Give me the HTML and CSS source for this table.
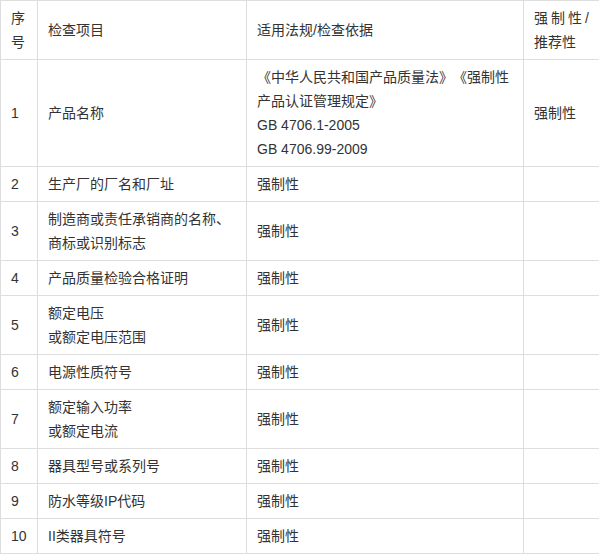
FILE: index.html
```html
<!DOCTYPE html>
<html lang="zh">
<head>
<meta charset="utf-8">
<link rel="stylesheet" href="styles.css">
</head>
<body>
<table class="spec">
<colgroup>
<col class="c-no">
<col class="c-item">
<col class="c-law">
<col class="c-type">
</colgroup>
<thead>
<tr><th>序号</th><th>检查项目</th><th>适用法规/检查依据</th><th class="just">强制性/推荐性</th></tr>
</thead>
<tbody>
<tr><td>1</td><td>产品名称</td><td>《中华人民共和国产品质量法》《强制性产品认证管理规定》<br>GB 4706.1-2005<br>GB 4706.99-2009</td><td>强制性</td></tr>
<tr><td>2</td><td>生产厂的厂名和厂址</td><td>强制性</td><td></td></tr>
<tr><td>3</td><td>制造商或责任承销商的名称、商标或识别标志</td><td>强制性</td><td></td></tr>
<tr><td>4</td><td>产品质量检验合格证明</td><td>强制性</td><td></td></tr>
<tr><td>5</td><td>额定电压<br>或额定电压范围</td><td>强制性</td><td></td></tr>
<tr><td>6</td><td>电源性质符号</td><td>强制性</td><td></td></tr>
<tr><td>7</td><td>额定输入功率<br>或额定电流</td><td>强制性</td><td></td></tr>
<tr><td>8</td><td>器具型号或系列号</td><td>强制性</td><td></td></tr>
<tr><td>9</td><td>防水等级IP代码</td><td>强制性</td><td></td></tr>
<tr><td>10</td><td>II类器具符号</td><td>强制性</td><td></td></tr>
</tbody>
</table>
</body>
</html>
```
FILE: styles.css
```css
html, body {
  margin: 0;
  padding: 0;
  background: #fff;
}
body {
  font-family: "Liberation Sans", "Noto Sans CJK SC", sans-serif;
  font-size: 14px;
  color: #333;
  text-spacing-trim: space-all;
}
.spec {
  border-collapse: collapse;
  table-layout: fixed;
  width: 604px;
}
.c-no { width: 37px; }
.c-item { width: 209px; }
.c-law { width: 277px; }
.c-type { width: 81px; }
.spec th,
.spec td {
  border: 1px solid #ddd;
  padding: 5px 10px;
  line-height: 24px;
  text-align: left;
  vertical-align: middle;
  font-weight: normal;
  word-break: break-all;
}
.spec th.just {
  text-align: justify;
  padding-right: 15px;
}
```
